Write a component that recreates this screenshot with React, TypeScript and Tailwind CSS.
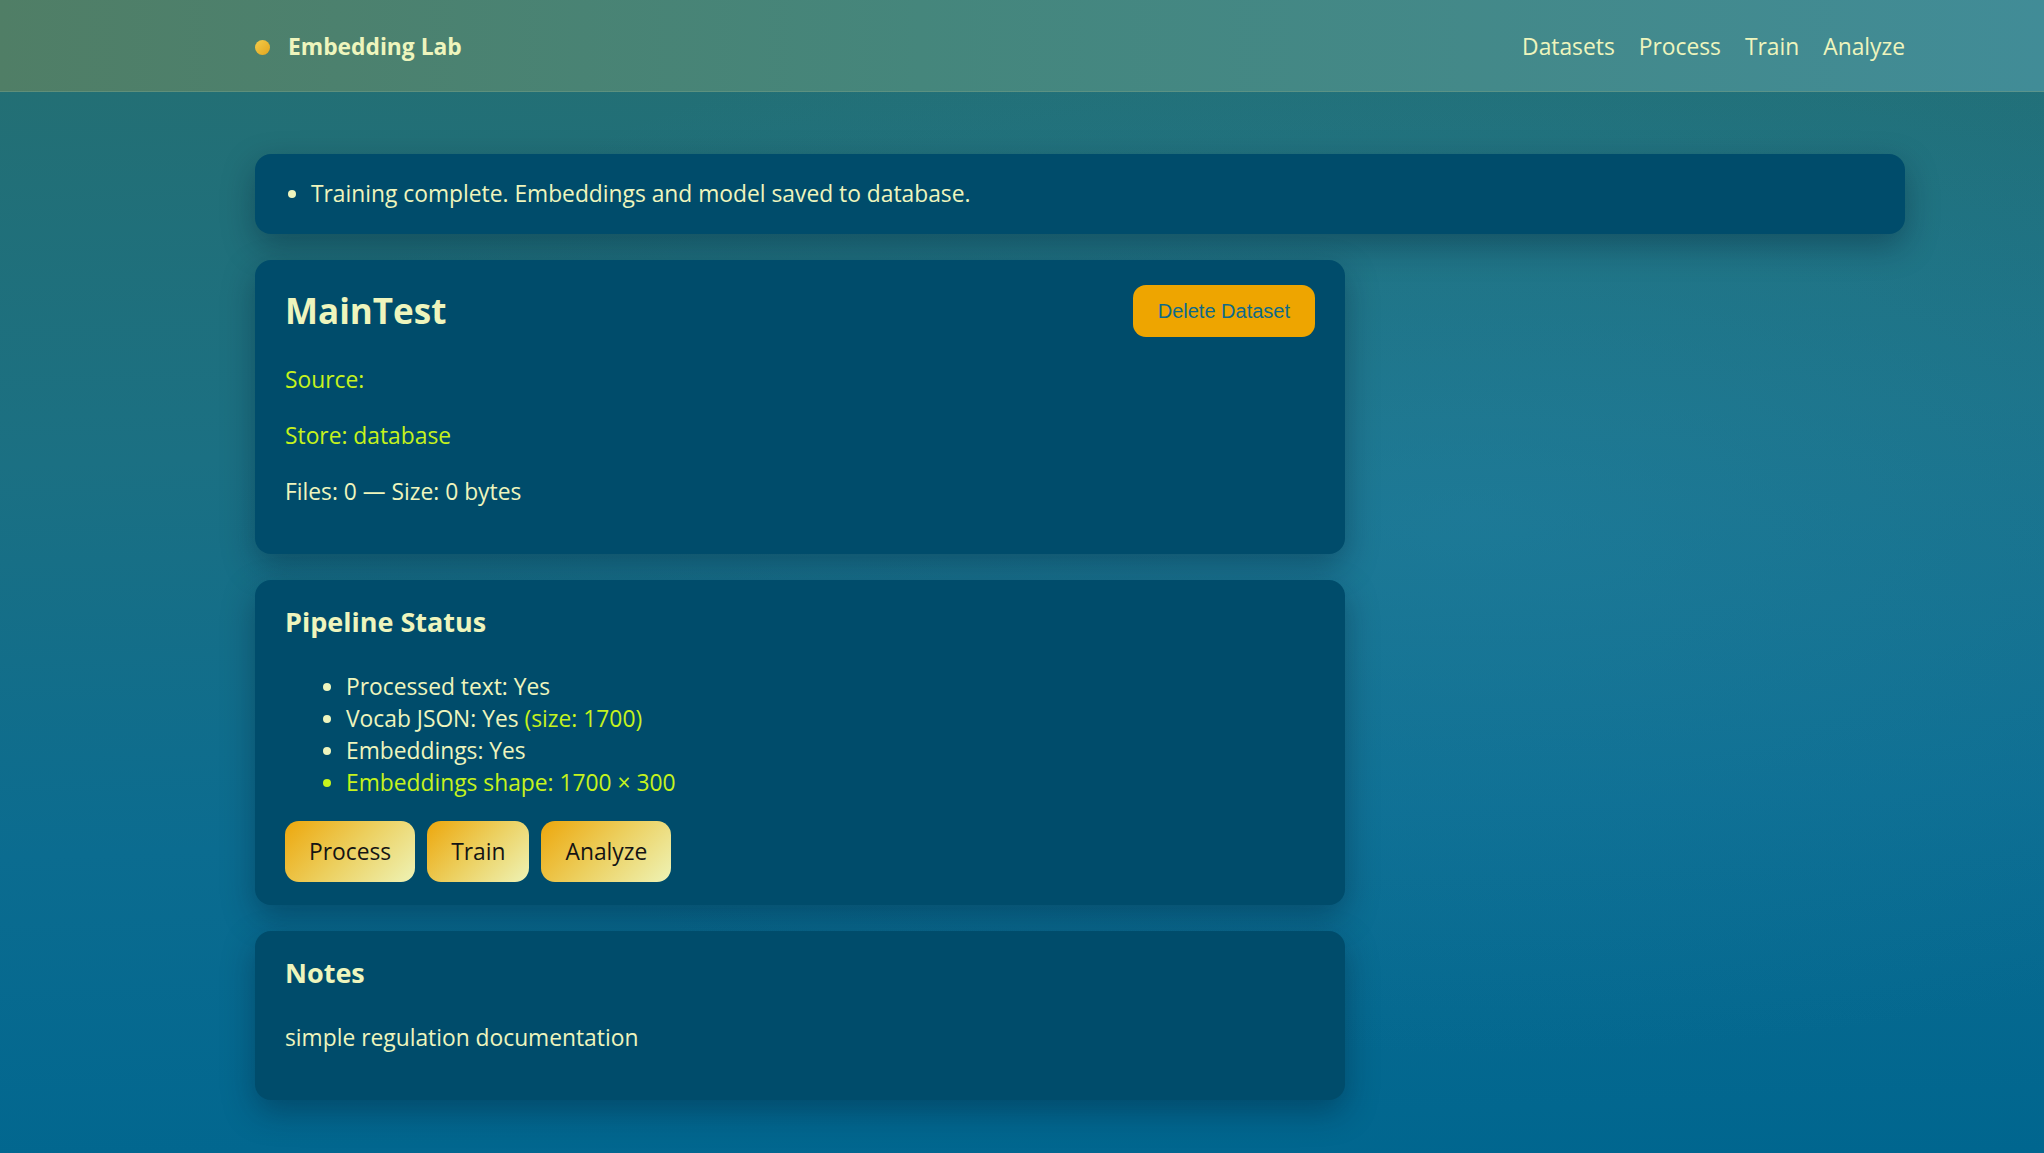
const navLinks = ['Datasets', 'Process', 'Train', 'Analyze'];

const pipeline = [
  { label: 'Processed text: Yes', extra: null, highlight: false },
  { label: 'Vocab JSON: Yes', extra: '(size: 1700)', highlight: false },
  { label: 'Embeddings: Yes', extra: null, highlight: false },
  { label: 'Embeddings shape: 1700 × 300', extra: null, highlight: true },
];

const actions = ['Process', 'Train', 'Analyze'];

function Header() {
  return (
    <header className="h-[92px] border-b border-[#6a9a86]/60 bg-[linear-gradient(90deg,#507e66_0%,#45867c_45%,#418c97_100%)]">
      <div className="ml-[255px] flex h-full w-[1650px] items-center justify-between pt-[3px]">
        <div className="flex items-center gap-[18px]">
          <span className="h-[15px] w-[15px] rounded-full bg-[linear-gradient(135deg,#f3cc4a,#e3a51e)]" />
          <span className="text-[22.8px] font-bold text-[#eef5bd]">Embedding Lab</span>
        </div>
        <nav className="flex items-center gap-[24px] text-[22.8px] text-[#eef5bd]">
          {navLinks.map((link) => (
            <a key={link} href="#" className="hover:underline">
              {link}
            </a>
          ))}
        </nav>
      </div>
    </header>
  );
}

function Card({ children }: { children: React.ReactNode }) {
  return (
    <section className="w-[1090px] rounded-[16px] bg-[#004c6b] px-[30px] pt-[24px] pb-[46px] shadow-[0_12px_32px_rgba(0,20,40,0.35)]">
      {children}
    </section>
  );
}

export default function App() {
  return (
    <div className="min-h-screen bg-[radial-gradient(ellipse_at_72%_45%,rgba(40,140,180,0.35),transparent_60%),linear-gradient(178deg,#256f71_0%,#1b7083_38%,#0b6c90_70%,#00668f_100%)] font-['Open_Sans',sans-serif] text-[22.8px] leading-[32px] text-[#eef5bd]">
      <Header />

      <main className="ml-[255px] flex w-[1650px] flex-col gap-[26px] pt-[62px] pb-[52px]">
        <div className="rounded-[16px] bg-[#004c6b] px-[30px] py-[24px] shadow-[0_12px_32px_rgba(0,20,40,0.35)]">
          <ul className="list-disc pl-[26px]">
            <li>Training complete. Embeddings and model saved to database.</li>
          </ul>
        </div>

        <Card>
          <div className="flex h-[54px] items-center justify-between">
            <h1 className="text-[35px] leading-[54px] font-bold">MainTest</h1>
            <button className="h-[52px] rounded-[13px] bg-[#eea500] px-[25px] font-['Liberation_Sans',Arial,sans-serif] text-[20px] text-[#0d6a8a]">
              Delete Dataset
            </button>
          </div>
          <div className="mt-[26px] flex flex-col gap-[24px]">
            <p className="text-[#c6f31c]">Source: </p>
            <p className="text-[#c6f31c]">Store: database</p>
            <p>Files: 0 — Size: 0 bytes</p>
          </div>
        </Card>

        <section className="w-[1090px] rounded-[16px] bg-[#004c6b] px-[30px] pt-[24px] pb-[23px] shadow-[0_12px_32px_rgba(0,20,40,0.35)]">
          <h2 className="text-[27px] leading-[36px] font-bold">Pipeline Status</h2>
          <ul className="mt-[31px] list-disc pl-[61px]">
            {pipeline.map((item) => (
              <li key={item.label} className={item.highlight ? 'text-[#c6f31c]' : ''}>
                {item.label}
                {item.extra && <span className="text-[#c6f31c]"> {item.extra}</span>}
              </li>
            ))}
          </ul>
          <div className="mt-[22px] flex gap-[12px]">
            {actions.map((a) => (
              <button
                key={a}
                className="h-[61px] rounded-[14px] bg-[linear-gradient(135deg,#eda70c_0%,#ecd060_50%,#eef3b6_100%)] px-[24px] text-[22.8px] text-[#141414]"
              >
                {a}
              </button>
            ))}
          </div>
        </section>

        <Card>
          <h2 className="text-[27px] leading-[36px] font-bold">Notes</h2>
          <p className="mt-[31px]">simple regulation documentation</p>
        </Card>
      </main>
    </div>
  );
}
